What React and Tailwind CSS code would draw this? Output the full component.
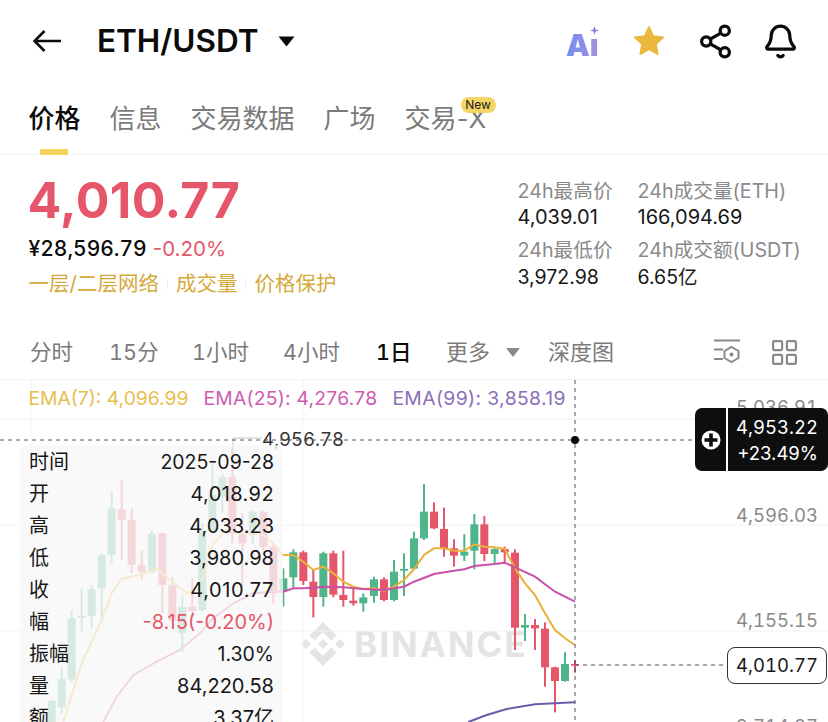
import React from "react";
import { Share2, Bell } from "lucide-react";
import { SiBinance } from "react-icons/si";

const FONT = { fontFamily: 'Inter, "Noto Sans CJK SC", sans-serif' };
const G = "#4fb58a";
const R = "#e5566a";

const leftCandles = [
  [155, 960, 962, 1060, 1080, G],
  [185, 860, 898, 982, 1000, G],
  [215, 690, 715, 898, 905, G],
  [245, 625, 708, 713, 755, G],
  [275, 615, 628, 708, 745, G],
  [305, 520, 525, 625, 730, G],
  [335, 335, 385, 525, 550, G],
  [365, 298, 388, 420, 540, R],
  [395, 385, 420, 555, 580, R],
  [425, 512, 556, 576, 600, R],
  [456, 452, 462, 575, 580, G],
  [487, 458, 460, 615, 700, R],
  [517, 590, 617, 722, 725, R],
  [547, 645, 680, 760, 815, G],
  [577, 595, 680, 693, 710, R],
  [607, 430, 450, 690, 695, G],
  [637, 250, 345, 450, 455, G],
  [667, 280, 292, 350, 400, G],
  [697, 200, 290, 460, 490, R],
  [727, 400, 460, 490, 620, R],
  [758, 390, 395, 465, 490, G],
  [790, 392, 395, 500, 510, R],
  [820, 490, 500, 640, 670, R],
];
const rightCandles = [
  [10, 325, 355, 392, 440, G],
  [40, 268, 277, 352, 382, G],
  [70, 272, 277, 363, 375, R],
  [100, 330, 365, 411, 472, R],
  [130, 275, 280, 411, 440, G],
  [160, 272, 280, 404, 412, R],
  [190, 272, 405, 420, 440, R],
  [220, 385, 422, 430, 437, R],
  [250, 400, 412, 430, 455, G],
  [282, 350, 358, 408, 428, G],
  [312, 352, 358, 420, 424, R],
  [342, 300, 335, 420, 424, G],
  [372, 280, 327, 332, 408, G],
  [402, 215, 235, 326, 330, G],
  [432, 72, 155, 235, 240, G],
  [462, 127, 155, 205, 208, R],
  [492, 143, 207, 265, 290, R],
  [522, 238, 265, 287, 320, R],
  [553, 223, 275, 287, 303, G],
  [583, 162, 193, 272, 328, G],
  [613, 168, 193, 282, 303, R],
  [644, 265, 267, 282, 310, G],
  [674, 260, 267, 277, 307, R],
  [705, 268, 278, 503, 570, R],
  [735, 462, 495, 503, 543, G],
  [765, 477, 495, 505, 570, R],
  [795, 487, 506, 622, 680, R],
  [825, 620, 622, 663, 757, R],
  [855, 577, 612, 663, 665, G],
  [885, 600, 612, 617, 638, R],
];

const L = (x, y) => [x / 3, y / 3];
const Rt = (x, y) => [x / 3 + 280, y / 3 + 80];
const pts = (a) => a.map((p) => p.map((n) => n.toFixed(1)).join(",")).join(" ");

const ema7 = [
  ...[[190, 1026], [245, 850], [305, 720], [335, 640], [365, 597], [425, 583], [470, 565], [510, 600], [560, 640], [600, 620], [640, 490], [680, 450], [720, 458], [780, 460], [820, 490], [845, 522]].map((p) => L(...p)),
  ...[[10, 285], [40, 285], [70, 305], [100, 330], [130, 320], [160, 340], [190, 365], [220, 380], [250, 387], [282, 385], [312, 392], [342, 380], [372, 360], [402, 328], [432, 285], [462, 265], [492, 265], [522, 272], [553, 272], [583, 253], [613, 260], [644, 262], [674, 267], [705, 325], [735, 370], [765, 405], [795, 460], [825, 510], [855, 535], [885, 555]].map((p) => Rt(...p)),
];
const ema25 = [
  ...[[310, 1026], [350, 950], [400, 885], [470, 845], [540, 810], [600, 760], [640, 715], [700, 670], [760, 640], [820, 635]].map((p) => L(...p)),
  ...[[10, 395], [40, 385], [70, 385], [100, 383], [130, 380], [190, 382], [250, 387], [312, 390], [372, 380], [402, 365], [462, 342], [522, 332], [553, 328], [583, 318], [644, 312], [674, 308], [705, 322], [765, 350], [825, 395], [885, 425]].map((p) => Rt(...p)),
];
const ema99 = [[565, 786], [620, 765], [680, 747], [765, 733], [885, 727]].map((p) => Rt(...p));

function Candle({ c, map }) {
  const [x, wt, bt, bb, wb, col] = c;
  const [cx, a] = map(x, wt);
  const [, b] = map(x, bt);
  const [, d] = map(x, bb);
  const [, e] = map(x, wb);
  return (
    <g>
      <rect x={cx - 1} y={a} width={2} height={e - a} fill={col} />
      <rect x={cx - 4} y={b} width={8} height={Math.max(d - b, 1.6)} fill={col} />
    </g>
  );
}

function Chart() {
  return (
    <svg width="828" height="342" className="absolute left-0 top-0">
      {[39, 145, 251].map((y) => (
        <line key={y} x1="0" x2="828" y1={y} y2={y} stroke="#f2f2f2" />
      ))}
      {[31, 303].map((x) => (
        <line key={x} x1={x} x2={x} y1="0" y2="342" stroke="#f2f2f2" />
      ))}
      <polyline points="233,100 233,58 262,58" fill="none" stroke="#c4c4c4" strokeWidth="1" />
      {leftCandles.map((c) => (
        <Candle key={c[0]} c={c} map={L} />
      ))}
      {rightCandles.map((c) => (
        <Candle key={c[0]} c={c} map={Rt} />
      ))}
      <polyline points={pts(ema7)} fill="none" stroke="#e9b13a" strokeWidth="2" />
      <polyline points={pts(ema25)} fill="none" stroke="#c950a8" strokeWidth="2" />
      <polyline points={pts(ema99)} fill="none" stroke="#6f5aa8" strokeWidth="2" />
    </svg>
  );
}

function Overlay() {
  return (
    <svg width="828" height="342" className="absolute left-0 top-0">
      <line x1="0" x2="695" y1="60" y2="60" stroke="#555" strokeDasharray="4 4" />
      <line x1="575" x2="575" y1="0" y2="342" stroke="#555" strokeDasharray="4 4" />
      <line x1="575" x2="727" y1="285" y2="285" stroke="#555" strokeDasharray="4 4" />
      <circle cx="575" cy="60" r="4" fill="#0b0b0b" />
    </svg>
  );
}

const infoRows = [
  ["时间", "2025-09-28", "text-[19.500px]"],
  ["开", "4,018.92", "tracking-[0.4px]"],
  ["高", "4,033.23", ""],
  ["低", "3,980.98", ""],
  ["收", "4,010.77", "tracking-[0.6px]"],
  ["幅", "-8.15(-0.20%)", "text-[#e5566a]"],
  ["振幅", "1.30%", "text-[19.500px]"],
  ["量", "84,220.58", ""],
  ["额", "3.37亿", ""],
];

export default function App() {
  return (
    <div style={FONT} className="w-[828px] h-[722px] overflow-hidden bg-white flex flex-col">
      {/* header */}
      <div className="h-[82px] shrink-0 flex items-center pl-[33px] pr-[29px]">
        <svg width="29" height="22" viewBox="0 0 29 22" fill="none" stroke="#0b0b0b" strokeWidth="2.6">
          <path d="M1 11H28M11.5 1 1.5 11l10 10" />
        </svg>
        <span className="ml-[35px] text-[31.500px] leading-none font-semibold text-[#0b0b0b]">ETH/USDT</span>
        <svg width="17" height="11" viewBox="0 0 17 11" className="ml-[19px]">
          <path d="M0.5 0.5h16L8.5 10.5z" fill="#0b0b0b" />
        </svg>
        <div className="ml-auto flex items-center">
          <div className="relative w-[34px] h-[32px]">
            <span className="absolute left-0 bottom-[-3px] text-[30px] leading-[30px] font-black bg-gradient-to-r from-[#6f8cf0] to-[#a890e0] bg-clip-text text-transparent">Aı</span>
            <svg width="9" height="9" viewBox="0 0 10 10" className="absolute right-[1px] top-[1px]">
              <path d="M5 0 6.2 3.8 10 5 6.2 6.2 5 10 3.8 6.2 0 5 3.8 3.8z" fill="#8d7ce0" />
            </svg>
          </div>
          <svg width="36" height="34" viewBox="0 0 24 24" className="ml-[31px]">
            <path d="M12 2l3 6.5 7 .9-5.100 4.900 1.300 7L12 17.900 5.800 21.300l1.300-7L2 9.400l7-.9z" fill="#e9b83c" stroke="#e9b83c" strokeWidth="1.200" strokeLinejoin="round" />
          </svg>
          <Share2 size={37} strokeWidth={2.1} color="#0b0b0b" className="ml-[30px]" />
          <Bell size={37} strokeWidth={2.1} color="#0b0b0b" className="ml-[28px]" />
        </div>
      </div>

      {/* tabs */}
      <div className="relative h-[73px] shrink-0 border-b border-[#f4f4f4] flex pl-[28.500px] gap-[29px] pt-[20px] text-[26px] leading-[34px] text-[#7b7b7b]">
        <span className="relative text-[#0b0b0b] font-medium">
          价格
          <span className="absolute left-[11.500px] top-[47px] w-[28px] h-[6px] bg-[#f2d45c]" />
        </span>
        <span>信息</span>
        <span>交易数据</span>
        <span>广场</span>
        <span className="relative">
          交易-X
          <span className="absolute left-[56px] top-[-5px] h-[16px] w-[35px] rounded-full bg-[#f5d565] text-[12px] leading-[16px] text-center text-[#1a1a1a]">New</span>
        </span>
      </div>

      {/* price summary */}
      <div className="h-[170px] shrink-0 flex pl-[28.500px]">
        <div className="w-[489px]">
          <div className="mt-[15px] -ml-[1px] text-[50px] leading-[60px] font-bold tracking-[0.4px] text-[#e5566a]">4,010.77</div>
          <div className="mt-[4px] flex text-[21px] leading-[30px] gap-[6px]">
            <span className="text-[#0b0b0b] font-medium tabular-nums">¥28,596.79</span>
            <span className="text-[#e5566a] text-[20.500px]">-0.20%</span>
          </div>
          <div className="mt-[5px] flex items-center text-[20.500px] leading-[30px] text-[#d5a93a]">
            <span>一层/二层网络</span>
            <span className="mx-[8px] w-px h-[10px] bg-[#eeeeee]" />
            <span>成交量</span>
            <span className="mx-[8px] w-px h-[10px] bg-[#eeeeee]" />
            <span>价格保护</span>
          </div>
        </div>
        <div className="pt-[22.500px] grid grid-cols-[120px_1fr] grid-rows-[26.500px_32.500px_27px_27px] text-[19.500px] leading-[27px] text-[#171717] whitespace-nowrap">
          <div className="text-[#8a8a8a] text-[19.700px]">24h最高价</div>
          <div className="text-[#8a8a8a] text-[19.700px]">24h成交量(ETH)</div>
          <div className="text-[20px]">4,039.01</div>
          <div className="text-[20px]">166,094.69</div>
          <div className="text-[#8a8a8a] text-[19.700px]">24h最低价</div>
          <div className="text-[#8a8a8a] text-[19.700px]">24h成交额(USDT)</div>
          <div>3,972.98</div>
          <div>6.65亿</div>
        </div>
      </div>

      {/* interval row */}
      <div className="relative h-[55px] shrink-0 border-b border-[#f4f4f4] flex items-center text-[21.500px] leading-[30px] text-[#7b7b7b] pl-[30px] pr-[31px]">
        <span className="w-[79px]">分时</span>
        <span className="w-[83px] tabular-nums">15分</span>
        <span className="w-[91px] tabular-nums">1小时</span>
        <span className="w-[93px]">4小时</span>
        <span className="w-[70px] text-[#0b0b0b] font-medium tabular-nums">1日</span>
        <span className="text-[22px]">更多</span>
        <svg width="14" height="9" viewBox="0 0 14 9" className="ml-[16px]">
          <path d="M0 0h14L7 9z" fill="#8a8a8a" />
        </svg>
        <span className="ml-[28px] text-[22px]">深度图</span>
        <div className="ml-auto flex items-center gap-[31px]">
          <svg width="28" height="26" viewBox="0 0 28 26" fill="none" stroke="#8a8a8a" strokeWidth="2">
            <path d="M1 1.500h26M1 10.500h9M1 20h9" />
            <path d="M18.500 8l7 4v7l-7 4-7-4v-7z" />
            <circle cx="18.500" cy="15.500" r="2" fill="#8a8a8a" stroke="none" />
          </svg>
          <svg width="25" height="25" viewBox="0 0 25 25" fill="none" stroke="#8a8a8a" strokeWidth="2.200">
            <rect x="1.100" y="1.100" width="9" height="9" rx="1" />
            <rect x="14.900" y="1.100" width="9" height="9" rx="1" />
            <rect x="1.100" y="14.900" width="9" height="9" rx="1" />
            <rect x="14.900" y="14.900" width="9" height="9" rx="1" />
          </svg>
        </div>
      </div>

      {/* chart */}
      <div className="relative flex-1 overflow-hidden">
        {/* watermark */}
        <div className="absolute left-[301px] top-[242px] flex items-center gap-[9px] text-[#e4e4e4]">
          <SiBinance size={44} />
          <span className="text-[35px] leading-[44px] font-bold tracking-[2px]">BINANCE</span>
        </div>

        <Chart />

        {/* ema legend */}
        <div className="absolute left-[28.500px] top-[4px] flex gap-[15px] text-[19.300px] leading-[28px] whitespace-nowrap">
          <span className="text-[#e9bd4f]">EMA(7): 4,096.99</span>
          <span className="text-[#cf5cb0] tracking-[0.25px]">EMA(25): 4,276.78</span>
          <span className="text-[#8a70b8] tracking-[0.4px]">EMA(99): 3,858.19</span>
        </div>

        {/* axis */}
        <div className="absolute right-[10px] top-[14px] text-[18.500px] leading-[26px] tabular-nums text-[#8a8a8a]">5,036.91</div>
        <div className="absolute right-[10px] top-[122px] text-[18.500px] leading-[26px] tabular-nums text-[#8a8a8a]">4,596.03</div>
        <div className="absolute right-[10px] top-[227px] text-[18.500px] leading-[26px] tabular-nums text-[#8a8a8a]">4,155.15</div>
        <div className="absolute right-[10px] top-[333px] text-[18.500px] leading-[26px] tabular-nums text-[#8a8a8a]">3,714.27</div>

        {/* max price label */}
        <div className="absolute left-[262px] top-[46px] bg-white/70 text-[18.500px] leading-[26px] tabular-nums text-[#333333]">4,956.78</div>

        <Overlay />

        {/* info panel */}
        <div className="absolute left-[20px] top-[65px] w-[263px] h-[300px] rounded-[8px] bg-[#f8f8f8]/80 px-[9px] pt-[1px] text-[20px] leading-[32px] text-[#171717]">
          {infoRows.map(([k, v, c]) => (
            <div key={k} className="flex justify-between">
              <span>{k}</span>
              <span className={c}>{v}</span>
            </div>
          ))}
        </div>

        {/* price bubble */}
        <div className="absolute left-[695px] top-[28px] w-[133px] h-[63px] rounded-[7px] bg-[#0e0e0e] flex text-white">
          <div className="w-[31px] flex items-center justify-center">
            <svg width="20" height="20" viewBox="0 0 20 20">
              <circle cx="10" cy="10" r="9.500" fill="white" />
              <path d="M8.200 3.500h3.600v4.700h4.700v3.600h-4.700v4.700H8.200v-4.700H3.500V8.200h4.700z" fill="#0e0e0e" />
            </svg>
          </div>
          <div className="w-[2px] bg-white" />
          <div className="flex-1 pr-[10px] pt-[6px] text-right text-[18.500px] leading-[26px]">
            <div className="tabular-nums">4,953.22</div>
            <div>+23.49%</div>
          </div>
        </div>

        {/* last price */}
        <div className="absolute left-[727px] top-[267px] w-[100px] h-[37px] rounded-[8px] border border-[#333333] bg-white flex items-center justify-center text-[18.500px] tabular-nums text-[#171717]">
          4,010.77
        </div>
      </div>
    </div>
  );
}
